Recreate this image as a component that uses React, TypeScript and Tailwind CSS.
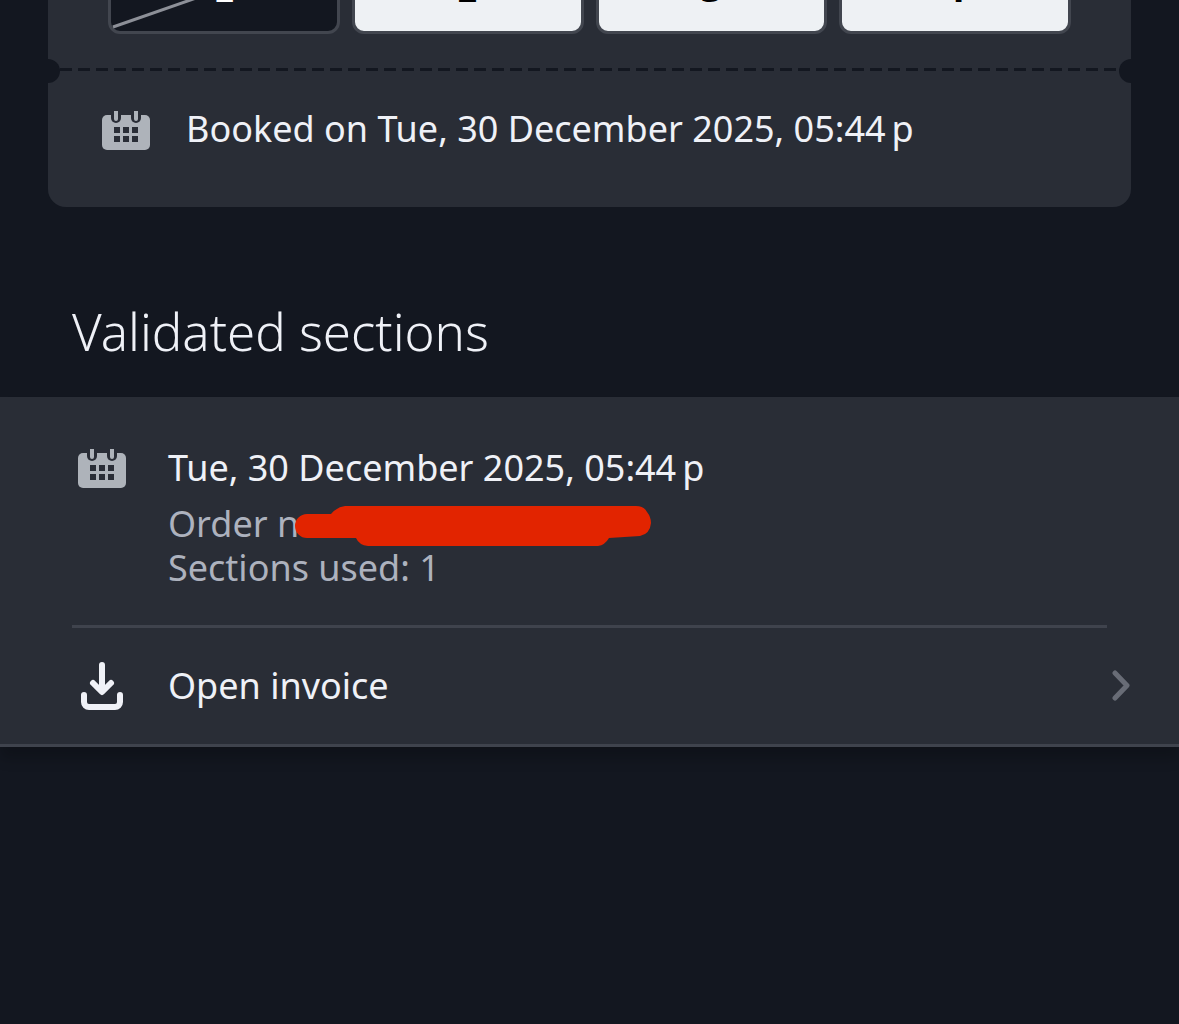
import clsx from "clsx";

const sections = [
  { number: 1, used: true },
  { number: 2, used: false },
  { number: 3, used: false },
  { number: 4, used: false },
];

function CalendarIcon() {
  return (
    <svg viewBox="0 -1 48 42" className="h-[42px] w-12 shrink-0" aria-hidden="true">
      <rect y="6" width="48" height="35" rx="5" fill="#aeb3ba" />
      {[14, 34].map((x) => (
        <g key={x}>
          <path d={`M${x - 5} 3v6a5 5 0 0 0 10 0V3z`} fill="#292d36" />
          <path d={`M${x - 2} 2h4v8a2 2 0 0 1-4 0z`} fill="#aeb3ba" />
        </g>
      ))}
      {[12, 21, 30].map((x) => (
        <g key={x} fill="#292d36">
          <rect x={x} y="18" width="6" height="6" />
          <rect x={x} y="27" width="6" height="6" />
        </g>
      ))}
    </svg>
  );
}

function DownloadIcon() {
  return (
    <svg viewBox="0 0 48 52" className="h-[52px] w-12 shrink-0" aria-hidden="true">
      <g fill="none" stroke="#eff1f7" strokeWidth="6" strokeLinecap="round" strokeLinejoin="round">
        <path d="M24 5v26M15 23l9 9 9-9" />
        <path d="M6 35v7a5 5 0 0 0 5 5h26a5 5 0 0 0 5-5v-7" />
      </g>
    </svg>
  );
}

function ChevronIcon() {
  return (
    <svg viewBox="0 0 20 32" className="h-8 w-5 shrink-0" aria-hidden="true">
      <path
        d="M4 3l12 12.5L4 28"
        fill="none"
        stroke="#686c76"
        strokeWidth="5"
        strokeLinecap="round"
        strokeLinejoin="round"
      />
    </svg>
  );
}

function SectionTile({ number, used }: { number: number; used: boolean }) {
  return (
    <div
      className={clsx(
        "relative flex h-28 flex-1 shrink-0 items-end justify-center rounded-xl border-[3px] border-[#42464f] pb-5 font-['DejaVu_Sans',sans-serif] text-[32px] leading-[40px] font-bold",
        used ? "bg-[#131720] text-white" : "bg-[#eef1f4] text-black"
      )}
    >
      {used && (
        <svg
          viewBox="0 0 226 106"
          preserveAspectRatio="none"
          className="absolute inset-0 size-full"
          aria-hidden="true"
        >
          <path d="M2 102L226 24" stroke="#8d9098" strokeWidth="3" />
        </svg>
      )}
      <span className="relative">{number}</span>
    </div>
  );
}

export default function App() {
  return (
    <main className="min-h-screen bg-[#131720] font-['Noto_Sans','Open_Sans',sans-serif] text-[36px] leading-[44px] text-[#eff1f7]">
      <section className="relative mx-12 overflow-hidden rounded-b-[18px] bg-[#292d36]">
        <div className="flex h-[34px] items-end gap-3 overflow-hidden px-[60px]">
          {sections.map((s) => (
            <SectionTile key={s.number} {...s} />
          ))}
        </div>
        <div className="relative mt-[25px] flex h-6 items-center">
          <span className="absolute top-0 -left-3 size-6 rounded-full bg-[#131720]" />
          <span className="absolute top-0 -right-3 size-6 rounded-full bg-[#131720]" />
          <div className="mx-3 mb-1 h-[3px] flex-1 bg-[repeating-linear-gradient(to_right,#131720_0_12px,transparent_12px_18px)]" />
        </div>
        <div className="flex items-center gap-9 px-[54px] pt-6 pb-14">
          <CalendarIcon />
          <p>Booked on Tue, 30 December 2025, 05:44{"\u2009"}p</p>
        </div>
      </section>

      <h1 className="px-[72px] pt-[92px] pb-[34px] text-[51px] leading-[64px] font-light">
        Validated sections
      </h1>

      <section className="border-b-[3px] border-[#3f434d] bg-[#292d36] shadow-[0_12px_12px_rgba(0,0,0,0.2)]">
        <div className="mx-[72px] flex items-start gap-[42px] border-b-[3px] border-[#3f434d] pt-[49px] pr-6 pb-[35px] pl-[6px]">
          <CalendarIcon />
          <div>
            <p>Tue, 30 December 2025, 05:44{"\u2009"}p</p>
            <div className="mt-3 text-[#adb2be]">
              <p className="relative">
                Order n
                <svg
                  viewBox="0 0 358 42"
                  className="absolute top-[3px] left-[126px] h-[42px] w-[358px]"
                  aria-hidden="true"
                >
                  <path
                    d="M13 9H37Q43 2 51 1H342Q350 1 353 7Q357 12 357 18Q356 29 346 31L315 33Q311 40 304 41H74Q65 40 62 33H13A12 12 0 0 1 13 9z"
                    fill="#e22400"
                  />
                </svg>
              </p>
              <p>Sections used: 1</p>
            </div>
          </div>
        </div>
        <a href="#invoice" className="flex items-center gap-[42px] py-8 pr-12 pl-[78px]">
          <DownloadIcon />
          <span className="flex-1">Open invoice</span>
          <ChevronIcon />
        </a>
      </section>
    </main>
  );
}
